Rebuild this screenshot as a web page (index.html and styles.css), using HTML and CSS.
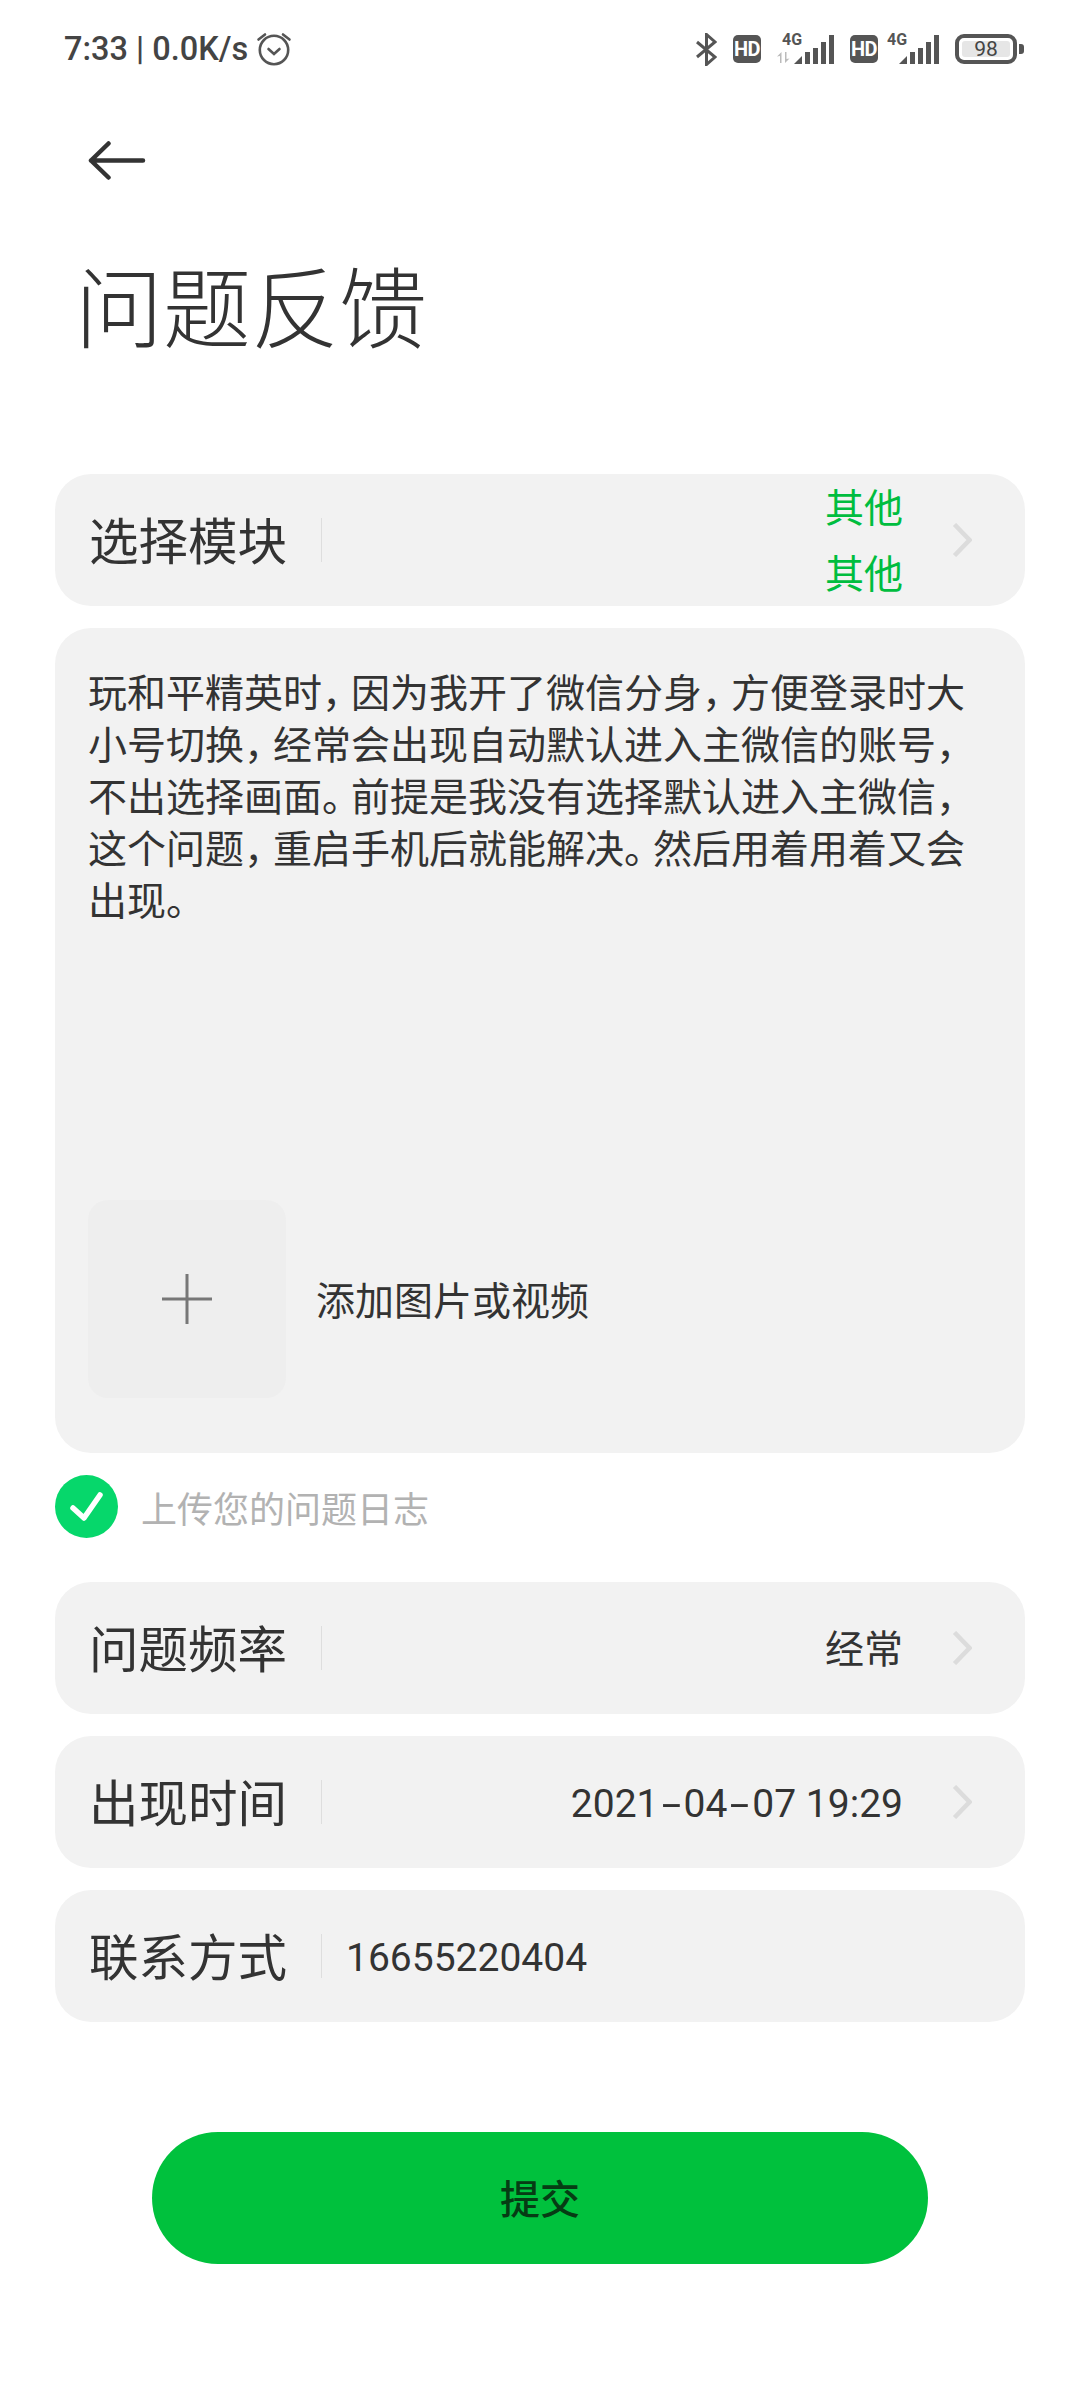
FILE: index.html
```html
<!DOCTYPE html>
<html lang="zh-CN">
<head>
    <meta charset="UTF-8">
    <title>问题反馈</title>
    <link rel="stylesheet" href="styles.css">
</head>
<body>
<div class="status">
    <span class="time">7:33 | 0.0K/s</span>
    <svg class="alarm" width="36" height="36" viewBox="0 0 36 36" fill="none" stroke="#555" stroke-width="2.6" stroke-linecap="round">
        <circle cx="18" cy="19" r="14.2"/>
        <path d="M12.5 18l5.5 5 5.5-5"/>
        <path d="M2.5 8.5L9 3.5M33.5 8.5L27 3.5"/>
    </svg>
    <div class="status-right">
        <svg width="21" height="33" viewBox="0 0 21 33" fill="none" stroke="#555" stroke-width="3">
            <path d="M1 9L19 24L10.500 31.500V1.500L19 9L1 24"/>
        </svg>
        <span class="hd">HD</span>
        <svg class="sig" width="57" height="36" viewBox="0 -4 57 36">
            <text class="net" x="5" y="12">4G</text>
            <path fill="#bbb" d="M3 30V23L0 23.500L4.500 19V30zM8 19V30L12.500 25.500L9.500 26V19z"/>
            <path fill="#555" d="M17 31L25 23V31zM28 19h5v12h-5zM36 15h5v16h-5zM44 9h5v22h-5zM52 2h5v29h-5z"/>
        </svg>
        <span class="hd">HD</span>
        <svg class="sig sig2" width="52" height="36" viewBox="0 -4 52 36">
            <text class="net" x="0" y="12">4G</text>
            <path fill="#555" d="M12 31L20 23V31zM23 19h5v12h-5zM31 15h5v16h-5zM39 9h5v22h-5zM47 2h5v29h-5z"/>
        </svg>
        <div class="battery"><span class="level">98</span></div>
    </div>
</div>

<svg class="back" width="58" height="39" viewBox="0 0 58 39" fill="none" stroke="#333" stroke-width="4.500" stroke-linecap="round" stroke-linejoin="round">
    <path d="M55 19.500H3M20.500 2.500L3 19.500L20.500 36.500"/>
</svg>

<h1 class="title">问题反馈</h1>

<div class="form">
    <div class="row">
        <span class="label">选择模块</span>
        <span class="line"></span>
        <div class="value green">其他<br>其他</div>
        <svg class="arrow" width="20" height="34" viewBox="0 0 20 34" fill="none" stroke="#dcdcdc" stroke-width="4.500"><path d="M2.500 1.500L17.500 17L2.500 32.500"/></svg>
    </div>

    <div class="desc">
        <p class="text">玩和平精英时<span class="mark">，</span>因为我开了微信分身<span class="mark">，</span>方便登录时大<br>小号切换<span class="mark">，</span>经常会出现自动默认进入主微信的账号<span class="mark">，</span><br>不出选择画面<span class="mark">。</span>前提是我没有选择默认进入主微信<span class="mark">，</span><br>这个问题<span class="mark">，</span>重启手机后就能解决<span class="mark">。</span>然后用着用着又会<br>出现<span class="mark">。</span></p>
        <div class="add">
            <div class="tile">
                <svg width="50" height="50" viewBox="0 0 50 50" stroke="#777" stroke-width="3"><path d="M25 0V50M0 25H50"/></svg>
            </div>
            <span class="add-text">添加图片或视频</span>
        </div>
    </div>

    <div class="log">
        <svg width="63" height="63" viewBox="0 0 63 63">
            <circle cx="31.500" cy="31.500" r="31.500" fill="#06d76b"/>
            <path d="M18 33L29 43L45 20" fill="none" stroke="#fff" stroke-width="5.500" stroke-linecap="round" stroke-linejoin="round"/>
        </svg>
        <span>上传您的问题日志</span>
    </div>

    <div class="row">
        <span class="label">问题频率</span>
        <span class="line"></span>
        <div class="value">经常</div>
        <svg class="arrow" width="20" height="34" viewBox="0 0 20 34" fill="none" stroke="#dcdcdc" stroke-width="4.500"><path d="M2.500 1.500L17.500 17L2.500 32.500"/></svg>
    </div>
    <div class="row">
        <span class="label">出现时间</span>
        <span class="line"></span>
        <div class="value">2021<span class="dash">-</span>04<span class="dash">-</span>07 19:29</div>
        <svg class="arrow" width="20" height="34" viewBox="0 0 20 34" fill="none" stroke="#dcdcdc" stroke-width="4.500"><path d="M2.500 1.500L17.500 17L2.500 32.500"/></svg>
    </div>
    <div class="row">
        <span class="label">联系方式</span>
        <span class="line"></span>
        <div class="value left">16655220404</div>
    </div>
</div>

<div class="submit">提交</div>
</body>
</html>
```
FILE: styles.css
```css
html,body{
    height: 100%;
    overflow: hidden;
}
*{
    margin:0;
    padding:0;
}
body{
    background: #fff;
    color: #333;
    font-family: Roboto, "Noto Sans CJK SC", sans-serif;
}
.status{
    height: 98px;
    display: flex;
    align-items: center;
    padding: 0 56px 0 64px;
}
.time{
    font-size: 32.500px;
    font-weight: 500;
    color: #444;
    line-height: 36px;
}
.alarm{
    margin-left: 8px;
}
.status-right{
    margin-left: auto;
    display: flex;
    align-items: center;
    gap: 16px;
}
.hd{
    width: 28px;
    height: 28px;
    border-radius: 5px;
    background: #555;
    color: #fff;
    font-size: 20px;
    font-weight: 700;
    line-height: 28px;
    text-align: center;
    letter-spacing: -0.5px;
}
.net{
    font-family: Roboto, sans-serif;
    font-size: 16px;
    font-weight: 700;
    fill: #555;
}
.sig{
    margin-top: -4px;
}
.sig2{
    margin-left: -7px;
}
.battery{
    position: relative;
    box-sizing: border-box;
    width: 62px;
    height: 30px;
    margin-right: 7px;
    border: 4px solid #555;
    border-radius: 9px;
    padding: 3px;
    display: flex;
}
.battery:after{
    content: "";
    position: absolute;
    right: -11px;
    top: 6px;
    width: 5px;
    height: 10px;
    border-radius: 0 3px 3px 0;
    background: #555;
}
.level{
    flex: 1;
    background: #e6e6e6;
    border-radius: 3px;
    color: #444;
    font-size: 21px;
    line-height: 16px;
    text-align: center;
}
.back{
    display: block;
    margin: 43px 0 0 88px;
}
.title{
    margin: 73px 0 0 75px;
    height: 100px;
    font-size: 88px;
    font-weight: 300;
    line-height: 100px;
    color: #333;
    font-family: "Noto Sans CJK SC", sans-serif;
}
.form{
    margin: 121px 55px 0;
    display: flex;
    flex-direction: column;
}
.row{
    height: 132px;
    margin-bottom: 22px;
    border-radius: 36px;
    background: #f2f2f2;
    padding: 0 53px 0 34px;
    display: flex;
    align-items: center;
}
.row:last-child{
    margin-bottom: 0;
}
.label{
    width: 198px;
    padding-bottom: 2px;
    font-size: 49.500px;
    line-height: 60px;
    color: #333;
    font-family: "Noto Sans CJK SC", sans-serif;
}
.line{
    width: 1px;
    height: 44px;
    margin-left: 34px;
    background: #dedede;
}
.value{
    flex: 1;
    padding-top: 3px;
    text-align: right;
    font-size: 39px;
    line-height: 66px;
    color: #333;
    margin-right: 49px;
}
.value.left{
    text-align: left;
    margin: 0 0 0 24px;
}
.dash{
    display: inline-block;
    width: 25px;
    text-align: center;
    transform: scaleX(1.8);
}
.green{
    color: #00bd3f;
}
.desc{
    height: 825px;
    box-sizing: border-box;
    margin-bottom: 22px;
    border-radius: 36px;
    background: #f2f2f2;
    padding: 40px 33px 55px;
    display: flex;
    flex-direction: column;
    justify-content: space-between;
}
.text{
    font-size: 39px;
    line-height: 52px;
    color: #333;
    white-space: nowrap;
}
.mark{
    letter-spacing: -10px;
}
.add{
    display: flex;
    align-items: center;
}
.tile{
    width: 198px;
    height: 198px;
    border-radius: 20px;
    background: #eee;
    display: flex;
    align-items: center;
    justify-content: center;
}
.add-text{
    margin-left: 30px;
    padding-bottom: 3px;
    font-size: 39px;
    color: #333;
}
.log{
    height: 63px;
    margin: 0 0 44px;
    display: flex;
    align-items: center;
    gap: 23px;
    font-size: 36px;
    color: #b2b2b2;
}
.submit{
    width: 776px;
    height: 132px;
    margin: 110px auto 0;
    border-radius: 66px;
    background: #00c13d;
    color: #063c14;
    font-size: 40px;
    font-weight: 500;
    line-height: 130px;
    text-align: center;
    font-family: "Noto Sans CJK SC", sans-serif;
}
```
